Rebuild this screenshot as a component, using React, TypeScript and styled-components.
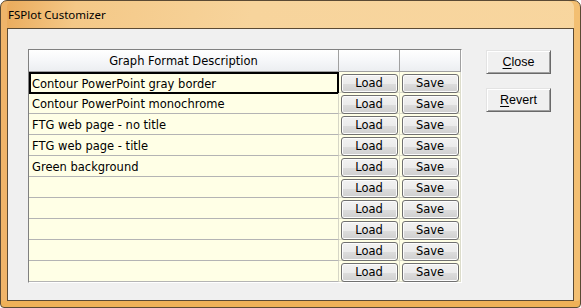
import { FC, Fragment } from "react"
import styled, { createGlobalStyle } from "styled-components"

const GlobalStyle = createGlobalStyle`
  html, body {
    margin: 0;
    padding: 0;
    background: #ffffff;
  }
  body {
    font-family: "DejaVu Sans", Verdana, sans-serif;
  }
`

const formats = [
  "Contour PowerPoint gray border",
  "Contour PowerPoint monochrome",
  "FTG web page - no title",
  "FTG web page - title",
  "Green background",
  "",
  "",
  "",
  "",
  "",
]

const StyledWindow = styled.div`
  box-sizing: border-box;
  width: 581px;
  height: 308px;
  display: flex;
  flex-direction: column;
  padding: 0 6px 6px 6px;
  border: 1px solid #5b4a34;
  border-radius: 7px 7px 4px 4px;
  background: linear-gradient(100deg, #eaa959 0%, #f4c887 12%, #f7d49c 40%, #f8d69f 100%);
  box-shadow: inset 0 -6px 0 #efb158, inset 6px 0 0 #efb46a, inset -6px 0 0 #f3bf72;
`

const StyledTitleBar = styled.div`
  height: 27px;
  display: flex;
  align-items: center;
  padding-left: 1px;
  font-family: "Noto Sans", "Open Sans", sans-serif;
  font-size: 11.5px;
  color: #000000;
`

const StyledClient = styled.div`
  flex: 1;
  display: flex;
  align-items: flex-start;
  gap: 24px;
  padding: 20px 0 0 20px;
  background: #f0f0f0;
  border: 1px solid #5b4a34;
`

const StyledGrid = styled.div`
  display: grid;
  grid-template-columns: 310px 61px 61px;
  grid-auto-rows: 21px;
  grid-template-rows: 22px;
  border: 1px solid;
  border-color: #808080 #ffffff #ffffff #808080;
  background: #ffffe6;
`

const StyledHeader = styled.div`
  display: flex;
  align-items: center;
  justify-content: center;
  font-size: 11.5px;
  color: #000000;
  background: linear-gradient(#ffffff 0%, #f7f8fa 45%, #eceef1 100%);
  border-right: 1px solid #a0a0a0;
  border-bottom: 1px solid #a0a0a0;
`

const StyledDescCell = styled.div<{ $selected?: boolean }>`
  box-sizing: border-box;
  display: flex;
  align-items: center;
  padding: 1px 0 0 ${(p) => (p.$selected ? "1px" : "3px")};
  font-size: 11.5px;
  color: #000000;
  white-space: nowrap;
  border-right: 1px solid #d6d6c6;
  border-bottom: 1px solid #b4b4b4;
  ${(p) =>
    p.$selected &&
    `
    border: 2px solid #000000;
    margin: 0 0 -1px 0;
  `}
`

const StyledButtonCell = styled.div`
  display: flex;
  align-items: center;
  justify-content: center;
  border-right: 1px solid #dcdccb;
  border-bottom: 1px solid #dcdccb;
  padding-top: 2px;
`

const StyledRowButton = styled.button`
  box-sizing: border-box;
  width: 57px;
  height: 19px;
  padding: 0 0 1px 0;
  font-family: inherit;
  font-size: 11.5px;
  color: #000000;
  border: 1px solid #707070;
  border-radius: 3px;
  background: linear-gradient(#f2f2f2 0%, #ebebeb 50%, #dddddd 51%, #cfcfcf 100%);
  box-shadow: inset 0 0 0 1px #fcfcfc;
`

const StyledSide = styled.div`
  display: flex;
  flex-direction: column;
  gap: 14px;
  padding-top: 1px;
`

const StyledDialogButton = styled.button`
  box-sizing: border-box;
  width: 65px;
  height: 24px;
  padding: 0 0 1px 0;
  font-family: "Liberation Sans", Arial, sans-serif;
  font-size: 12.5px;
  color: #000000;
  background: #f0f0f0;
  border: 1px solid;
  border-color: #e3e3e3 #696969 #696969 #e3e3e3;
  box-shadow: inset 1px 1px 0 #ffffff, inset -1px -1px 0 #a0a0a0;

  u {
    text-decoration-thickness: 1px;
    text-underline-offset: 2px;
  }
`

const App: FC = () => {
  return (
    <>
      <GlobalStyle />
      <StyledWindow>
        <StyledTitleBar>FSPlot Customizer</StyledTitleBar>
        <StyledClient>
          <StyledGrid>
            <StyledHeader>Graph Format Description</StyledHeader>
            <StyledHeader />
            <StyledHeader />
            {formats.map((name, i) => (
              <Fragment key={i}>
                <StyledDescCell $selected={i === 0}>{name}</StyledDescCell>
                <StyledButtonCell>
                  <StyledRowButton type='button'>Load</StyledRowButton>
                </StyledButtonCell>
                <StyledButtonCell>
                  <StyledRowButton type='button'>Save</StyledRowButton>
                </StyledButtonCell>
              </Fragment>
            ))}
          </StyledGrid>
          <StyledSide>
            <StyledDialogButton type='button'>
              <u>C</u>lose
            </StyledDialogButton>
            <StyledDialogButton type='button'>
              <u>R</u>evert
            </StyledDialogButton>
          </StyledSide>
        </StyledClient>
      </StyledWindow>
    </>
  )
}

export default App
